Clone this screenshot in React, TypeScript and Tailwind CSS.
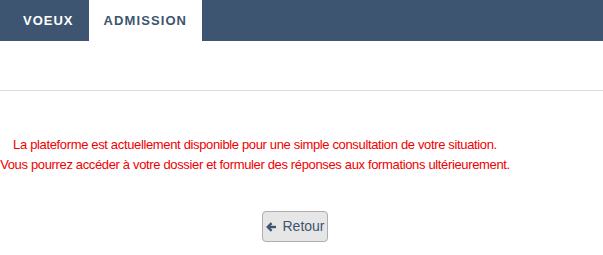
import React from "react";

export default function App() {
  return (
    <div className="w-[603px] h-[255px] bg-white overflow-hidden" style={{ fontFamily: '"Liberation Sans", Arial, sans-serif' }}>
      <nav className="h-[41px] bg-[#3d5570] flex pl-[8px]">
        <div className="px-[15px] flex items-center text-[13px] font-bold tracking-[1px] text-white">VOEUX</div>
        <div className="px-[15px] flex items-center text-[13px] font-bold tracking-[1.1px] text-[#3d5570] bg-white">ADMISSION</div>
      </nav>
      <div className="h-[49px]" />
      <hr className="border-0 h-px bg-[#dcdcdc]" />
      <div className="pt-[44px] w-[510px] text-center text-[13px] leading-[20px] tracking-[-0.35px] whitespace-nowrap text-[#f00000]">
        <p>La plateforme est actuellement disponible pour une simple consultation de votre situation.</p>
        <p>Vous pourrez accéder à votre dossier et formuler des réponses aux formations ultérieurement.</p>
      </div>
      <div className="flex justify-center pt-[36px]">
        <button className="ml-[-13px] h-[31px] w-[66px] flex items-center justify-center gap-[6px] pl-[1px] bg-[#e6e6e6] border border-[#adadad] rounded-[4px] text-[14px] text-[#3d5570]">
          <svg width="10" height="10" viewBox="0 0 10 10" fill="none" stroke="#3d5570" strokeWidth="2.4" strokeLinejoin="miter" className="mt-[1px]">
            <path d="M2 5H10" />
            <path d="M5.6 1.2L1.8 5L5.6 8.8" />
          </svg>
          <span>Retour</span>
        </button>
      </div>
    </div>
  );
}
